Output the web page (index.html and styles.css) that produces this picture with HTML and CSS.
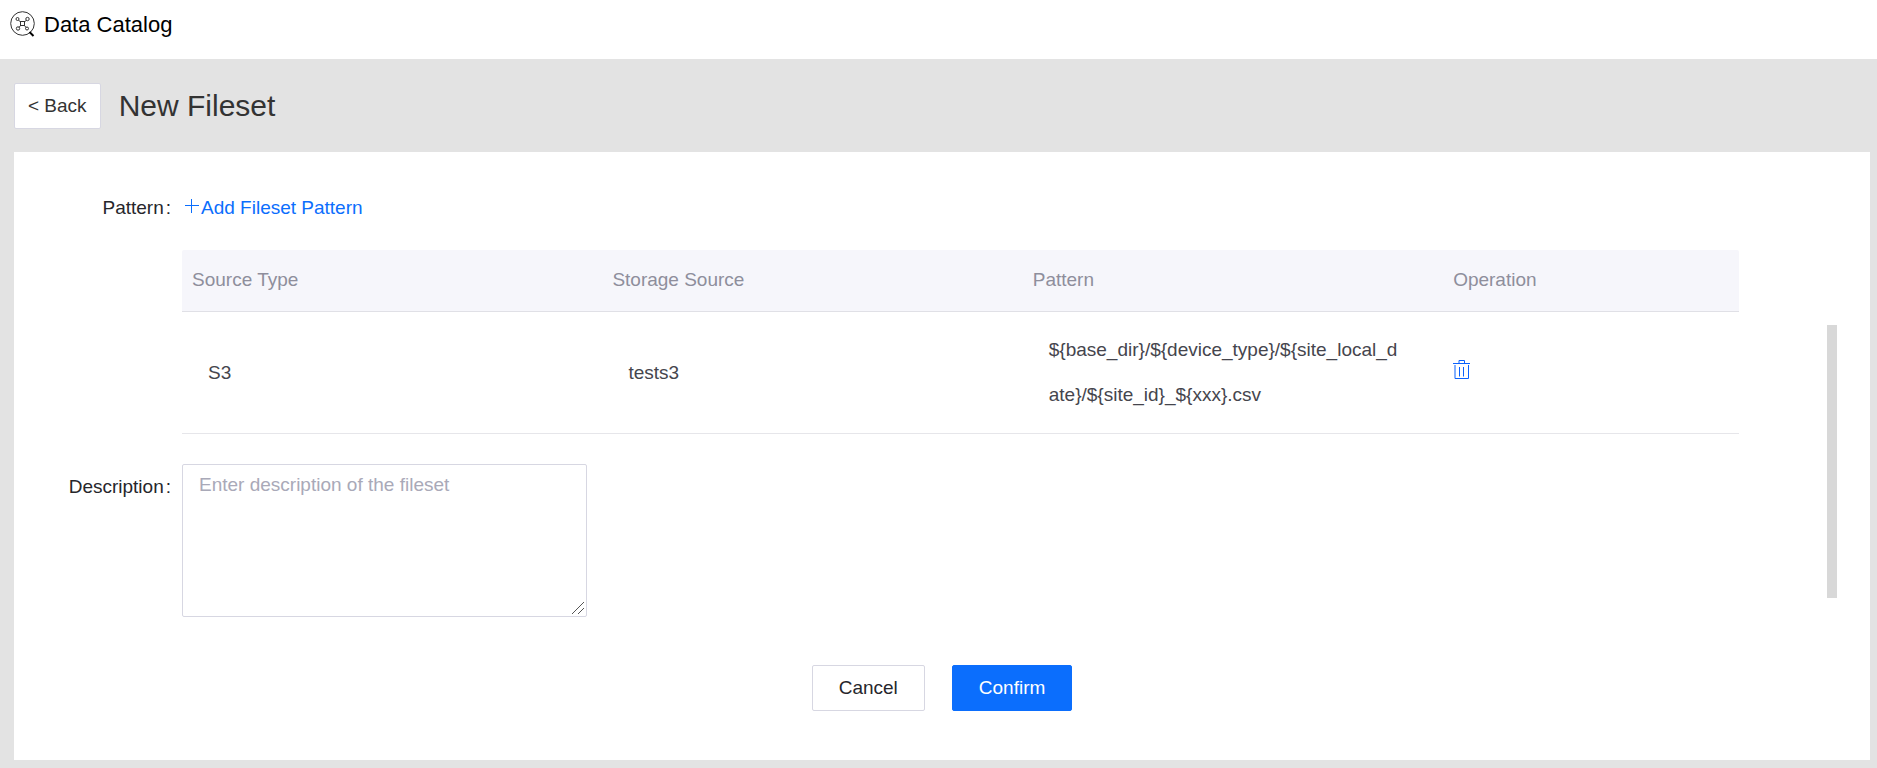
FILE: index.html
```html
<!DOCTYPE html>
<html lang="en">
<head>
<meta charset="utf-8">
<title>Data Catalog</title>
<link rel="stylesheet" href="styles.css">
</head>
<body>
<header class="topbar">
  <svg class="logo" viewBox="0 0 26 26" fill="none" stroke="#333" aria-hidden="true">
    <circle cx="12.500" cy="12.500" r="11.800" stroke-width="1"/>
    <path d="M19.500 21l4 4" stroke-width="2" stroke="#000"/>
    <rect x="10.500" y="10.500" width="4" height="4"/>
    <circle cx="7.500" cy="8" r="1.500"/>
    <circle cx="17.500" cy="8" r="1.700"/>
    <circle cx="8" cy="17.500" r="1.700"/>
    <circle cx="17" cy="17.500" r="1.500"/>
    <path d="M8.500 9l2 2M16.500 9l-2 2M9 16.500l1.500-2M16 16.500l-1.500-2"/>
  </svg>
  <span class="brand">Data Catalog</span>
</header>
<div class="heading">
  <button class="btn btn-back" type="button">&lt; Back</button>
  <h1 class="title">New Fileset</h1>
</div>
<main class="card">
  <div class="body">
    <form class="form" id="fileset">
      <div class="row">
        <span class="label">Pattern<span>:</span></span>
        <button class="add" type="button">
          <svg class="plus" viewBox="0 0 14 14" stroke="currentColor" aria-hidden="true"><path d="M0 6.500h14M6.500 0v14"/></svg>Add Fileset Pattern
        </button>
      </div>
      <table class="table">
        <thead>
          <tr><th>Source Type</th><th>Storage Source</th><th>Pattern</th><th>Operation</th></tr>
        </thead>
        <tbody>
          <tr>
            <td>S3</td>
            <td>tests3</td>
            <td>${base_dir}/${device_type}/${site_local_date}/${site_id}_${xxx}.csv</td>
            <td class="ops">
              <button class="trash" type="button" aria-label="Delete">
                <svg viewBox="0 0 18 20" width="18" height="20" fill="none" stroke="currentColor" aria-hidden="true">
                  <path d="M0 3.500h17M6 3V.500h5.500V3M2 5v13.500h13.500V5M6.500 7v9.500M10.500 7v9.500"/>
                </svg>
              </button>
            </td>
          </tr>
        </tbody>
      </table>
      <div class="row row-top">
        <label class="label" for="desc">Description<span>:</span></label>
        <textarea class="area" id="desc" placeholder="Enter description of the fileset"></textarea>
      </div>
    </form>
    <div class="rail"></div>
  </div>
  <footer class="actions">
    <button class="btn" type="button">Cancel</button>
    <button class="btn btn-primary" type="submit" form="fileset">Confirm</button>
  </footer>
</main>
</body>
</html>
```
FILE: styles.css
```css
* { box-sizing: border-box; }
body {
  margin: 0;
  min-height: 100vh;
  display: flex;
  flex-direction: column;
  background: #e3e3e3;
  font: 19px/24px "Liberation Sans", Arial, sans-serif;
  color: #26262b;
}
button, textarea { font: inherit; }
.topbar {
  display: flex;
  align-items: flex-start;
  gap: 8px;
  padding: 11px 10px 20px;
  background: #fff;
}
.logo { width: 26px; height: 26px; }
.brand { font-size: 22px; line-height: 28px; color: #000; }
.heading {
  display: flex;
  align-items: center;
  gap: 18px;
  padding: 24px 14px 23px;
}
.title { margin: 0; font-size: 30px; line-height: 40px; font-weight: 400; color: #333; }
.btn {
  height: 46px;
  padding: 0 26px;
  border: 1px solid #d7d7e2;
  border-radius: 2px;
  background: #fff;
  color: #26262b;
}
.btn-back { padding: 0 13px; color: #333; }
.btn-primary { border-color: #0b6efd; background: #0b6efd; color: #fff; }
.card {
  flex: 1;
  margin: 0 7px 8px 14px;
  padding: 32px 33px 49px 0;
  background: #fff;
}
.body { display: flex; gap: 88px; }
.form { flex: 1; }
.row { display: flex; align-items: center; gap: 11px; }
.row-top { align-items: flex-start; }
.label {
  display: flex;
  justify-content: flex-end;
  gap: 2px;
  width: 157px;
  line-height: 48px;
}
.row-top .label { line-height: 46px; }
.add {
  display: flex;
  align-items: center;
  gap: 2px;
  padding: 0 3px;
  border: 0;
  background: none;
  color: #0b6efd;
}
.plus { width: 14px; height: 14px; margin-bottom: 4px; }
.table {
  width: calc(100% - 168px);
  margin: 18px 0 30px 168px;
  border-collapse: separate;
  border-spacing: 0;
  table-layout: fixed;
}
.table th {
  width: 27%;
  height: 62px;
  padding: 0 10px 2px;
  border-bottom: 1px solid #e0e0e6;
  background: #f6f6fb;
  color: #8e8e9c;
  font-weight: 400;
  text-align: left;
}
.table th:first-child { border-top-left-radius: 2px; }
.table th:last-child { width: 19%; border-top-right-radius: 2px; }
.table td {
  padding: 15px 42px 16px 26px;
  border-bottom: 1px solid #e6e6ea;
  color: #45454d;
  line-height: 45px;
  word-break: break-all;
}
.table .ops { padding: 0 10px 6px; }
.trash { display: block; padding: 0; border: 0; background: none; color: #0b62fd; }
.trash svg { display: block; }
.area {
  width: 405px;
  height: 153px;
  padding: 8px 16px;
  border: 1px solid #d7d7e2;
  border-radius: 2px;
  resize: vertical;
}
.area::placeholder { color: #a9a9b8; }
.area::-webkit-resizer {
  background: url("data:image/svg+xml,%3Csvg xmlns='http://www.w3.org/2000/svg' width='15' height='15' stroke='%23555'%3E%3Cpath d='M1 13L13 1M7 13L13 7'/%3E%3C/svg%3E") no-repeat;
}
.rail { width: 10px; margin: 141px 0 19px; background: #d8d8d8; }
.actions { display: flex; justify-content: center; gap: 27px; margin: 48px -33px 0 0; }
```
